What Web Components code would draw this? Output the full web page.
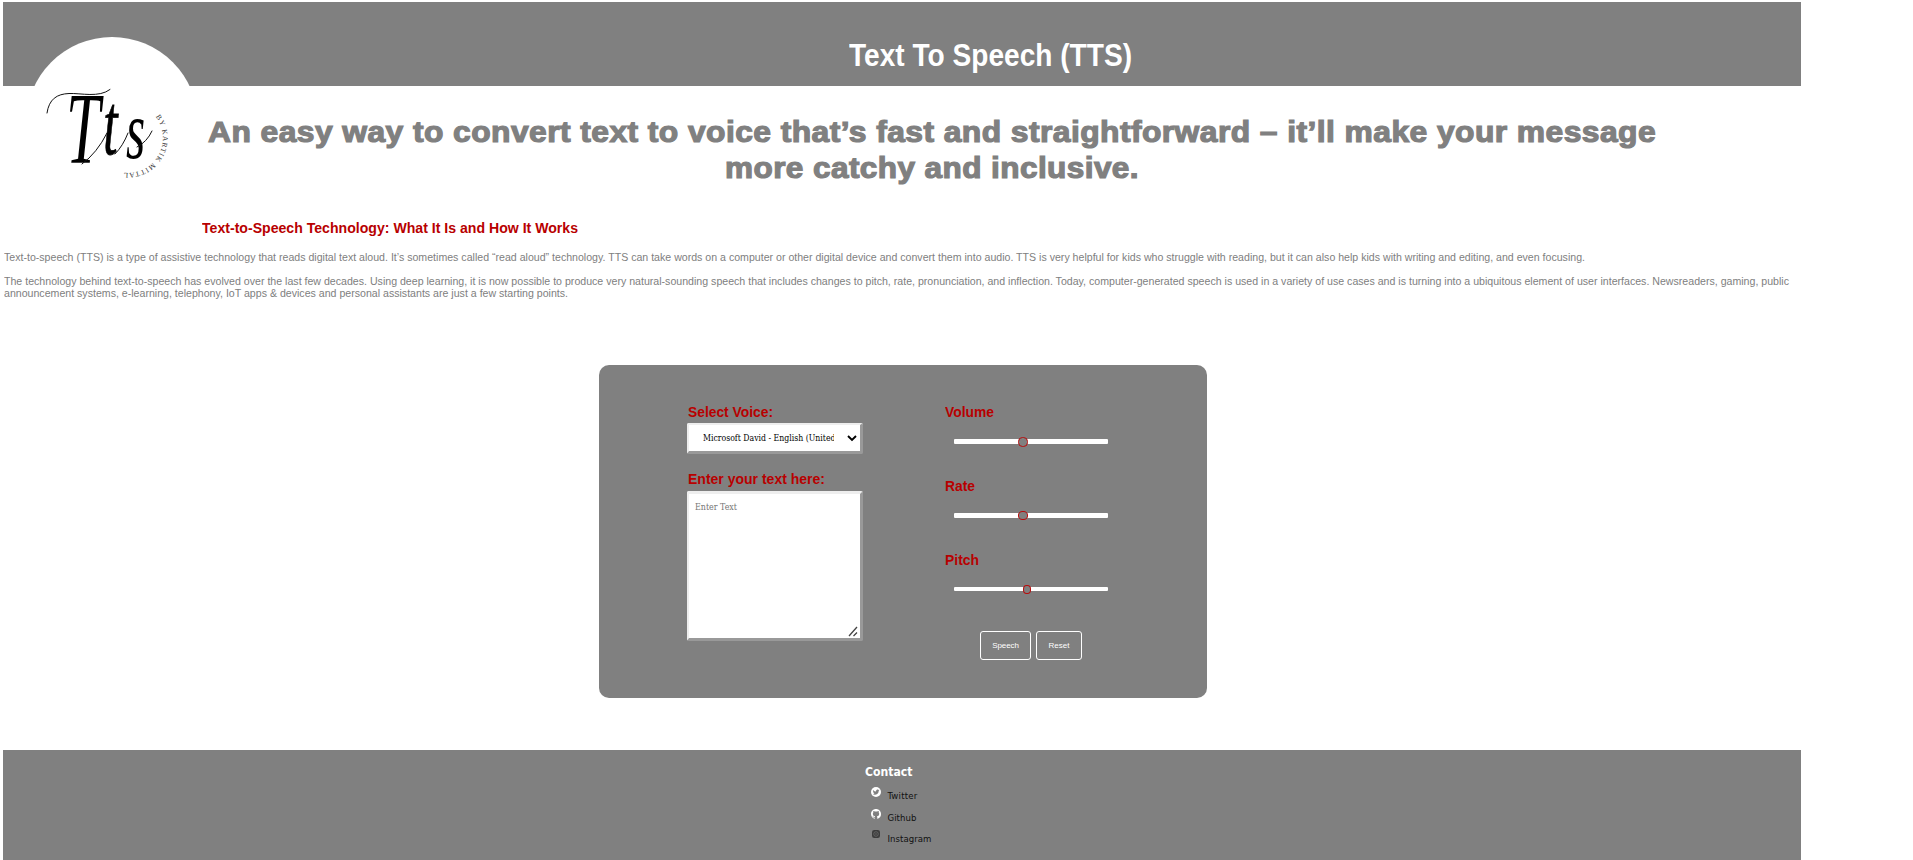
<!DOCTYPE html>
<html lang="en">
<head>
<meta charset="utf-8">
<title>Text To Speech (TTS)</title>
<style>
html,body{margin:0;background:#fff}
body{height:860px;overflow:hidden;font-family:"Liberation Sans",Arial,sans-serif}
</style>
</head>
<body>
<tts-app></tts-app>
<script>
const define = (name, html, setup) => customElements.define(name, class extends HTMLElement {
  constructor() {
    super();
    const t = document.createElement('template');
    t.innerHTML = html;
    this.attachShadow({mode: 'open'}).append(t.content.cloneNode(true));
  }
  connectedCallback() { if (setup) setup(this); }
});

// One line of text justified to a given width, by tracking or by horizontal stretch.
define('fit-text', `<style>
  :host{display:block;white-space:nowrap}
  span{display:inline-block;transform-origin:0 50%}
</style><span><slot></slot></span>`, el => {
  const s = el.shadowRoot.querySelector('span');
  const target = +el.getAttribute('w');
  if (!target) return;
  const natural = s.getBoundingClientRect().width;
  if (el.hasAttribute('stretch')) s.style.transform = 'scaleX(' + target / natural + ')';
  else s.style.letterSpacing = (target - natural) / el.textContent.length + 'px';
  el.style.width = target + 'px';
});

define('tts-logo', `<style>
  :host{display:block;width:172px;height:172px;border-radius:50%;background:#fff}
  svg{display:block;overflow:visible}
  .script{font-family:"Liberation Serif",serif;font-style:italic}
  .ring{font:7.2px "Liberation Serif",serif;fill:#333}
  .swash{fill:none;stroke:#111;stroke-width:1;stroke-linecap:round}
</style>
<svg width="172" height="172" viewBox="26 36 172 172">
  <defs><path id="ring" d="M128 102a35 35 0 0 1 0 70a35 35 0 0 1 -35 -35"/></defs>
  <text class="script" transform="scale(.6 1)"><tspan x="110" y="162" font-size="102">T</tspan><tspan x="172" y="153" font-size="86" stroke="#000" stroke-width=".8">t</tspan><tspan x="210" y="157" font-size="82">s</tspan></text>
  <path class="swash" d="M47 112C49 98 57 93 69 92.500S99 97 110 88.500"/>
  <path class="swash" d="M82 163Q97 152 107 132M115 153Q123 145 128 132M137 146Q147 141 152 130"/>
  <text class="ring"><textPath href="#ring" startOffset="32" textLength="82">BY KARTIK MITTAL</textPath></text>
</svg>`);

define('tts-header', `<style>
  :host{display:grid;grid-template-columns:199px 1fr;height:84px;background:#808080;align-items:start}
  tts-logo{margin:34.500px 0 0 23px}
  fit-text{margin:33px 0 0 647px;color:#fff;font-weight:bold;font-size:30.500px;line-height:40px}
</style><tts-logo></tts-logo><fit-text w="283" stretch>Text To Speech (TTS)</fit-text>`);

define('tts-intro', `<style>
  :host{display:block}
  .big{color:#808080;font-weight:bold;font-size:30px;line-height:36px;letter-spacing:.400px;-webkit-text-stroke:1.200px #808080}
  .l1{margin:28px 0 0 205px}
  .l2{margin:0 0 0 722px}
  .sub{margin:32px 0 0 199px;color:#b80000;font-size:15px;font-weight:bold;line-height:20px}
  .p{margin-left:1px;color:#808080;font-size:11px;line-height:12px}
</style>
<fit-text class="big l1" w="1448" stretch>An easy way to convert text to voice that’s fast and straightforward – it’ll make your message</fit-text>
<fit-text class="big l2" w="414" stretch>more catchy and inclusive.</fit-text>
<fit-text class="sub" w="376" stretch>Text-to-Speech Technology: What It Is and How It Works</fit-text>
<fit-text class="p" style="margin-top:13px" w="1581" stretch>Text-to-speech (TTS) is a type of assistive technology that reads digital text aloud. It’s sometimes called “read aloud” technology. TTS can take words on a computer or other digital device and convert them into audio. TTS is very helpful for kids who struggle with reading, but it can also help kids with writing and editing, and even focusing.</fit-text>
<fit-text class="p" style="margin-top:12px" w="1785" stretch>The technology behind text-to-speech has evolved over the last few decades. Using deep learning, it is now possible to produce very natural-sounding speech that includes changes to pitch, rate, pronunciation, and inflection. Today, computer-generated speech is used in a variety of use cases and is turning into a ubiquitous element of user interfaces. Newsreaders, gaming, public</fit-text>
<fit-text class="p" w="564" stretch>announcement systems, e-learning, telephony, IoT apps &amp; devices and personal assistants are just a few starting points.</fit-text>`);

define('voice-select', `<style>
  :host{box-sizing:border-box;display:flex;align-items:center;justify-content:space-between;width:176px;height:31px;background:#fff;
    border-style:solid;border-width:2px 3px 3px 2px;border-color:#eee #999 #999 #eee;border-radius:2px;padding:0 3px 0 14px}
  div{width:131px;overflow:hidden;font:9.500px/14px "DejaVu Serif Condensed","DejaVu Serif",serif;color:#000}
  svg{display:block}
</style><div><fit-text w="132.500" stretch>Microsoft David - English (United</fit-text></div>
<svg width="10" height="8" viewBox="0 0 10 8"><path d="M1 2l4 4 4-4" fill="none" stroke="#000" stroke-width="1.900"/></svg>`);

define('text-box', `<style>
  :host{box-sizing:border-box;display:flex;flex-direction:column;justify-content:space-between;width:176px;height:150px;background:#fff;
    border-style:solid;border-width:3px 3px 3px 2px;border-color:#eee #999 #999 #eee;border-radius:2px;padding:6px 2px 1px 6px}
  fit-text{font:9.500px/14px "DejaVu Serif Condensed","DejaVu Serif",serif;color:#757575}
  svg{display:block;align-self:flex-end}
</style><fit-text w="42" stretch>Enter Text</fit-text>
<svg width="10" height="11" viewBox="0 0 10 11"><path d="M1 10l8-9M5.500 10l3.500-3.500" fill="none" stroke="#444" stroke-width="1.300"/></svg>`);

define('range-slider', `<style>
  :host{display:block;height:74px}
  .label{color:#b80000;font-size:15px;font-weight:bold;line-height:20px}
  .track{display:flex;align-items:center;width:154px;height:var(--track,5px);margin:17px 0 0 9px;background:#fff;border-radius:1px}
  i{box-sizing:border-box;width:var(--tw,10px);height:var(--th,10px);flex:none;margin-left:var(--pos);border:1px solid #b80c0c;border-radius:45%;background:#808080}
</style><div class="label"><slot></slot></div><div class="track"><i></i></div>`);

define('outline-button', `<style>
  :host{box-sizing:border-box;display:flex;justify-content:center;align-items:center;height:29px;border:1px solid #fff;border-radius:3px;color:#fff;font-size:8px}
</style><slot></slot>`);

define('tts-panel', `<style>
  :host{box-sizing:border-box;display:grid;grid-template-columns:258px 1fr;width:608px;height:333px;margin:66px 0 0 596px;padding:37px 0 0 88px;background:#808080;border-radius:10px}
  .label{margin-left:1px;color:#b80000;font-size:15px;font-weight:bold;line-height:20px}
  voice-select{margin-top:1px}
  .label.two{margin-top:15px;margin-bottom:2px}
  .buttons{display:flex;gap:5px;margin:7px 0 0 35px}
</style>
<div>
  <fit-text class="label" w="85" stretch>Select Voice:</fit-text>
  <voice-select></voice-select>
  <fit-text class="label two" w="137" stretch>Enter your text here:</fit-text>
  <text-box></text-box>
</div>
<div>
  <range-slider style="--pos:64px"><fit-text w="49" stretch>Volume</fit-text></range-slider>
  <range-slider style="--pos:64px;--th:9px"><fit-text w="30" stretch>Rate</fit-text></range-slider>
  <range-slider style="--pos:69px;--tw:8px;--th:9px;--track:4px"><fit-text w="34" stretch>Pitch</fit-text></range-slider>
  <div class="buttons">
    <outline-button style="width:51px"><fit-text w="26.500">Speech</fit-text></outline-button>
    <outline-button style="width:46px"><fit-text w="21">Reset</fit-text></outline-button>
  </div>
</div>`);

define('contact-link', `<style>
  :host{display:grid;grid-template-columns:17px auto;height:21.500px;color:#111;font:9.500px/14px "DejaVu Sans Condensed","DejaVu Sans",sans-serif}
  .text{margin:3px 0 0 -.5px}
</style><slot name="icon"></slot><div class="text"><slot></slot></div>`);

define('tts-footer', `<style>
  :host{box-sizing:border-box;display:block;height:110px;margin-top:52px;padding:14px 0 0 862px;background:#808080}
  .title{color:#fff;font:bold 12px/16px "DejaVu Sans Condensed","DejaVu Sans",sans-serif}
  contact-link{margin-left:6px}
  contact-link:first-of-type{margin-top:6px}
  svg{display:block;margin-top:1px}
</style>
<fit-text class="title" w="47.500" stretch>Contact</fit-text>
<contact-link><svg slot="icon" width="10" height="10" viewBox="0 0 20 20"><circle cx="10" cy="10" r="10" fill="#fff"/><path d="M4 6c2 2 4 3 6 3c0-4 4-5 5-3l2-.5l-1.500 2c0 5-4 8-8 8c-1.500 0-3-.5-4-1c1.500 0 2.500-.4 3.500-1c-1.500-.4-2-1-2.500-2h1.200C4.500 10.500 4 9.500 4 8.500l1 .2C3.800 8 3.500 7 4 6z" fill="#808080"/></svg><fit-text w="30">Twitter</fit-text></contact-link>
<contact-link><svg slot="icon" width="10" height="10" viewBox="0 0 16 16"><path fill="#fff" d="M8 0C3.580 0 0 3.580 0 8c0 3.540 2.290 6.530 5.470 7.590.4.070.55-.17.55-.38v-1.490c-2.010.37-2.530-.49-2.690-.94-.09-.23-.48-.94-.82-1.130-.28-.15-.68-.52-.01-.53.63-.01 1.080.58 1.230.82.72 1.210 1.870.87 2.330.66.070-.52.28-.87.51-1.070-1.780-.2-3.640-.89-3.640-3.950 0-.87.31-1.590.82-2.150-.08-.2-.36-1.020.08-2.120 0 0 .67-.21 2.200.82a7.700 7.700 0 0 1 4 0c1.530-1.040 2.200-.82 2.200-.82.44 1.100.16 1.920.08 2.120.51.56.82 1.270.82 2.150 0 3.070-1.870 3.750-3.650 3.950.29.25.54.73.54 1.480v2.200c0 .21.15.46.55.38A8.010 8.010 0 0 0 16 8c0-4.420-3.580-8-8-8z"/></svg><fit-text w="29">Github</fit-text></contact-link>
<contact-link><svg slot="icon" style="margin:1px 0 0 1px" width="8" height="8" viewBox="0 0 16 16"><rect width="16" height="16" rx="4.500" fill="#3c3c3c"/><circle cx="8" cy="8" r="4.600" fill="none" stroke="#757575" stroke-width="1.300"/><circle cx="8" cy="8" r="1.600" fill="#666"/></svg><fit-text w="44">Instagram</fit-text></contact-link>`);

define('tts-app', `<style>
  :host{display:flow-root;width:1798px;margin:0 0 0 3px;padding-top:2px}
</style>
<tts-header></tts-header><tts-intro></tts-intro><tts-panel></tts-panel><tts-footer></tts-footer>`);
</script>
</body>
</html>
